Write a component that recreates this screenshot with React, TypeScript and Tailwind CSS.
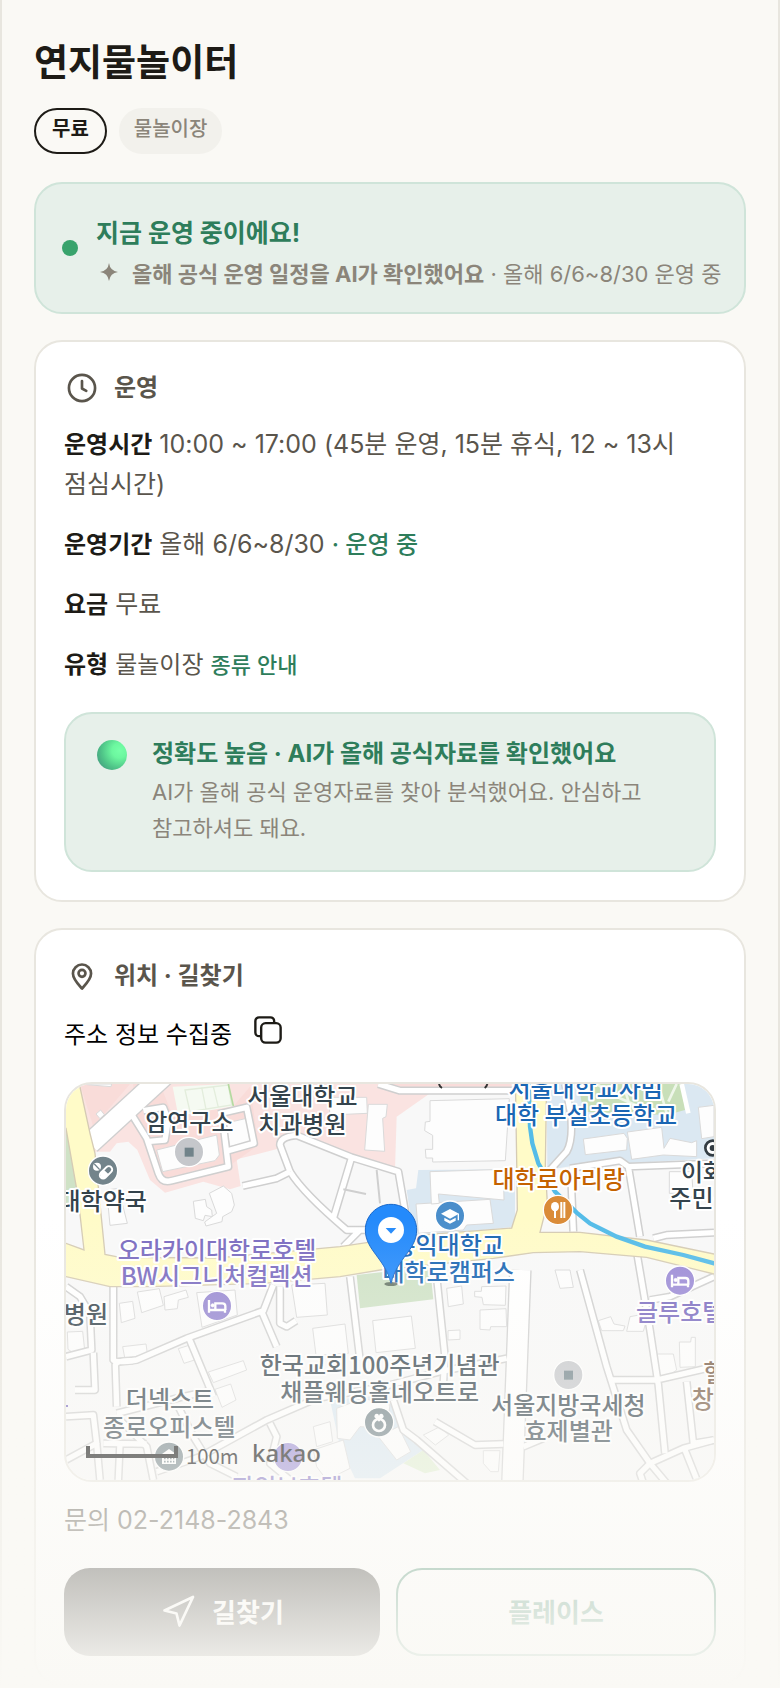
import { Navigation } from 'lucide-react'

type Label = { x: number; y: number; text: string; color: string; anchor?: 'start' | 'middle' | 'end' }

const INK = '#34434c'
const BLUE = '#1a66b3'
const PURPLE = '#7a6bc0'
const BROWN = '#73563f'

// map units are a third of a css pixel
const labels: Label[] = [
  { x: 757, y: 105, text: '서울대학교', color: INK },
  { x: 757, y: 188, text: '치과병원', color: INK },
  { x: 418, y: 183, text: '암연구소', color: INK },
  { x: 158, y: 421, text: '대학약국', color: INK },
  { x: 501, y: 566, text: '오라카이대학로호텔', color: PURPLE },
  { x: 500, y: 646, text: 'BW시그니처컬렉션', color: PURPLE },
  { x: 174, y: 759, text: '병원', color: INK, anchor: 'end' },
  { x: 989, y: 912, text: '한국교회100주년기념관', color: INK },
  { x: 989, y: 993, text: '채플웨딩홀네오트로', color: INK },
  { x: 360, y: 1014, text: '더넥스트', color: INK },
  { x: 358, y: 1099, text: '종로오피스텔', color: INK },
  { x: 712, y: 1277, text: '파인브호텔', color: PURPLE },
  { x: 1607, y: 81, text: '서울대학교사범', color: BLUE },
  { x: 1608, y: 161, text: '대학 부설초등학교', color: BLUE },
  { x: 1526, y: 354, text: '대학로아리랑', color: '#c46200' },
  { x: 1893, y: 334, text: '이화동', color: INK, anchor: 'start' },
  { x: 1858, y: 410, text: '주민센터', color: INK, anchor: 'start' },
  { x: 1196, y: 553, text: '홍익대학교', color: BLUE },
  { x: 1196, y: 634, text: '대학로캠퍼스', color: BLUE },
  { x: 1758, y: 752, text: '글루호텔', color: PURPLE, anchor: 'start' },
  { x: 1555, y: 1031, text: '서울지방국세청', color: INK },
  { x: 1556, y: 1111, text: '효제별관', color: INK },
  { x: 1960, y: 935, text: '헐', color: BROWN, anchor: 'start' },
  { x: 1925, y: 1014, text: '창', color: BROWN, anchor: 'start' },
]

const roads = [
  'M240 125L290 205L325 310Q335 340 365 332L535 290L520 165',
  'M290 215L345 210L355 150L340 112L280 122',
  'M505 132L590 112L612 220L535 242',
  'M578 348L680 325L720 305',
  'M850 445L905 262M720 305L690 225Q690 200 740 196L905 262L1045 305L1070 450',
  'M720 305Q760 370 890 480L1000 480M930 480L880 530',
  'M985 42L1050 62L1390 62',
  'M1500 300L1550 245Q1570 210 1562 130L1545 42',
  'M1560 295L1710 272L1735 290L1992 280M1562 295L1570 485M1735 290L1770 500',
  'M1810 505L1850 495L1992 488',
  'M190 650L190 870Q195 880 260 870L410 805L640 722L670 645',
  'M690 650L690 760L710 770L738 752M635 725L680 830',
  'M200 1010L196 885Q200 870 250 872M415 800L490 980',
  'M48 650L90 680L120 730L125 840L48 860',
  'M130 848L135 960L75 960M48 1040L130 1035L140 1120L48 1170',
  'M200 1030L400 980L490 960M200 1040L290 1130L310 1230',
  'M140 1120L150 1230M210 1120L205 1230M160 1120L290 1122',
  'M385 1010L430 1100L480 1180L560 1220M320 1205L450 1160L650 1050L800 985L1000 950L1170 905L1370 865',
  'M660 1060L680 1100L660 1180L720 1230',
  'M900 620L930 870M1160 620L1185 860L1180 940',
  'M1030 990L1060 1080L1100 1110L1250 1240',
  'M1155 1055L1275 1125L1360 1122M1420 1130L1480 1105',
  'M1590 600L1670 890L1730 1080L1800 1180L1850 1240',
  'M1760 545L1800 780L1825 945L1845 1150M1680 930L1820 930L1992 890',
  'M1800 690L1860 680L1992 620M1910 935L1930 1120L1992 1110',
  'M1800 1180L1900 1135L1992 1110M1905 1140L1945 1240M1800 1180L1770 1210L1780 1240',
]

const wideRoads = ['M360 0L120 220', 'M1411 600L1387 1240']

const buildings = [
  'M320 240L500 195L508 255L495 272L338 305Z',
  'M525 160L590 145L600 215L540 230Z',
  'M108 42L185 42L183 50L110 44Z',
  'M138 132L152 120L163 134L150 146Z',
  'M170 360L205 355L232 460L180 466Z',
  'M430 394L466 388L470 410L485 420L487 440L465 436L460 452L436 445Z',
  'M478 370L520 348L545 370L553 405L545 425L518 440L516 455L468 468L464 456L500 430Z',
  'M955 103L1012 103L1008 140L998 145L1004 244L944 240Z',
  'M835 82L950 82L952 130L840 135Z',
  'M1140 92L1378 86L1366 272L1148 276L1148 264L1128 264L1126 238L1148 238L1148 196L1124 182L1126 156L1140 154Z',
  'M1600 207L1722 190L1732 205L1730 240L1606 254Z',
  'M1732 186L1835 172L1842 235L1860 205L1925 218L1940 212L1940 260L1840 255L1745 268Z',
  'M1945 112L1992 106L1992 200L1955 206Z',
  'M1858 305L1925 305L1930 380L1890 385L1885 370L1858 370Z',
  'M1098 402L1320 388L1330 460L1250 465L1240 480L1105 490Z',
  'M1140 305L1360 298L1362 390L1165 372L1168 400L1144 402Z',
  'M262 666L328 656L340 706L275 728Z',
  'M342 680L408 660L415 682L385 690L382 716L345 720Z',
  'M208 700L248 694L255 745L214 758Z',
  'M440 668L555 660L562 735L456 772Z',
  'M52 786L98 784L104 840L66 846L54 838Z',
  'M218 830L288 822L292 850L225 868Z',
  'M385 836L420 825L434 870L402 880Z',
  'M475 906L580 872L590 900L490 938Z',
  'M495 958L542 942L558 990L516 1012Z',
  'M725 645L825 640L832 735L740 742Z',
  'M788 775L885 762L895 850L798 856Z',
  'M968 752L1084 738L1096 835L978 848Z',
  'M1190 655L1235 648L1240 702L1195 710Z',
  'M1295 650L1368 648L1366 706L1300 704L1296 682L1274 680L1274 664L1294 664Z',
  'M1290 720L1368 716L1370 770L1322 770L1320 780L1290 778Z',
  'M1194 782L1230 780L1230 808L1194 810Z',
  'M1515 600L1560 600L1570 652L1530 655Z',
  'M1645 752L1682 740L1692 762L1725 768L1720 782L1655 782Z',
  'M1740 740L1795 730L1780 784L1730 784Z',
  'M1888 816L1922 816L1924 802L1936 802L1936 890L1890 892Z',
  'M1822 852L1870 852L1880 900L1845 925L1824 915Z',
  'M1120 1095L1170 1070L1196 1095L1156 1125Z',
  'M1300 1142L1350 1142L1345 1205L1322 1205L1300 1180Z',
  'M860 1015L940 985L1020 1005L1010 1075L930 1070L900 1110L862 1105Z',
  'M985 1100L1045 1070L1082 1145L1040 1170Z',
  'M790 1070L840 1055L848 1115L800 1130Z',
  'M790 1140L880 1110L900 1195L830 1230L800 1190Z',
]

function Marker({ x, y, color, children }: { x: number; y: number; color: string; children?: React.ReactNode }) {
  return (
    <g transform={`translate(${x} ${y})`}>
      <circle r="44" fill={color} stroke="#fff" strokeWidth="4" />
      {children}
    </g>
  )
}

function Bed() {
  return (
    <g fill="none" stroke="#fff" strokeWidth="7">
      <path d="M-24 -18V20M-24 12H24V20" />
      <path d="M-5 12V-8H16Q25 -8 25 0V12" />
      <circle cx="-13" cy="-2" r="5" fill="#fff" strokeWidth="2" />
    </g>
  )
}

function LocationMap() {
  return (
    <svg
      viewBox="48 42 1944 1188"
      preserveAspectRatio="xMidYMid slice"
      className="block h-[396px] w-full"
      role="img"
      aria-label="지도"
    >
      <rect x="-400" y="-200" width="3000" height="1700" fill="#f8f8f8" />

      <path d="M88 42L1180 42L1040 140L1035 300L905 262L740 196L690 205L690 235L560 268L572 348L540 358L460 335L345 368L300 330L262 240L235 215L200 220L180 245L135 245L115 185Z" fill="#fae3e1" />
      <path d="M250 150L330 330L520 300L625 225L600 50L545 115L365 130L330 42L240 42L130 170L90 42L250 42Z" fill="#f9d9d7" opacity="0.8" />
      <path d="M1025 42H1385V64H1050Z" fill="#f9dcda" />
      <path d="M368 50L535 42L552 108L385 138Z" fill="#f5faf2" />
      <path d="M405 60L535 45L545 105L420 125ZM455 52L468 118M490 50L505 112" fill="none" stroke="#e3eddc" strokeWidth="4" />
      <path d="M535 42L550 108" stroke="#b5d9a0" strokeWidth="5" />
      <path d="M48 180L75 290L90 430L48 415Z" fill="#cfe2c6" />
      <path d="M1490 42H1992V265L1735 280L1710 265L1492 300Z" fill="#dbe8f2" />
      <path d="M1585 42L1895 42L1905 120L1850 135L1600 125Z" fill="#c8dfb9" />
      <path d="M1895 42L1915 130" stroke="#fff" strokeWidth="14" />
      <path d="M1640 42L1710 85L1790 120M1720 42L1740 110M1825 42L1850 130M1880 42L1855 95" fill="none" stroke="#eef6e9" strokeWidth="8" />
      <path d="M1105 300L1375 298L1395 330L1395 470L1090 500L1070 360L1098 355Z" fill="#dbe8f2" />
      <path d="M920 615L1140 590L1150 688L930 715Z" fill="#cfe2c6" />
      <path d="M840 990L1010 975L1060 1080L1120 1140L990 1225L915 1225L870 1130Z" fill="#d9e7f1" />
      <path d="M1060 1180L1120 1140L1170 1200L1125 1210Z" fill="#dfeed0" />

      <g fill="#fdfdfd" stroke="#dadada" strokeWidth="3">
        {buildings.map((d) => (
          <path key={d} d={d} />
        ))}
      </g>

      <g fill="none" strokeLinejoin="round">
        {wideRoads.map((d) => (
          <path key={d} d={d} stroke="#cfcfcf" strokeWidth="68" />
        ))}
        {roads.map((d) => (
          <path key={d} d={d} stroke="#cfcfcf" strokeWidth="25" />
        ))}
        {wideRoads.map((d) => (
          <path key={d} d={d} stroke="#fff" strokeWidth="60" />
        ))}
        {roads.map((d) => (
          <path key={d} d={d} stroke="#fff" strokeWidth="16" />
        ))}
        <path d="M880 358L948 372M980 300L990 400" stroke="#cfcfcf" strokeWidth="6" />
      </g>

      <path
        d="M-400 42H88L120 190L135 250L165 553L210 562L500 564L870 530L1090 497L1385 474L1402 420L1400 270L1396 20H1490L1486 290L1492 400L1470 487H1590L1790 510L1992 552L2500 640V740L1992 612L1790 562L1590 545L1450 548L1330 565L990 600L870 620L640 640L300 650L180 650L48 620L-400 560V470L48 520L102 540L84 380L48 175Z"
        fill="#fffbc8"
        stroke="#d5cbb4"
        strokeWidth="4"
      />
      <path
        d="M1436 42L1440 170L1447 220L1465 280L1515 365L1580 428L1620 460L1700 500L1785 530L1900 555L1992 580L2500 700"
        fill="none"
        stroke="#55bce8"
        strokeWidth="13"
      />

      <Marker x={417} y={246} color="#c5c7cb">
        <rect x="-13" y="-13" width="27" height="27" fill="#71838a" />
      </Marker>
      <Marker x={159} y={302} color="#73848b">
        <circle cx="-18" cy="-12" r="12" fill="#fff" />
        <path d="M-26 -20L-10 -3" stroke="#73848b" strokeWidth="4" />
        <rect x="-22" y="-10" width="44" height="20" rx="10" transform="translate(9 5) rotate(-45)" fill="none" stroke="#fff" strokeWidth="6" />
        <path d="M-7 20A10 10 0 0 0 8 20L17 11L3 -2L-7 8Z" fill="#fff" />
      </Marker>
      <Marker x={501} y={708} color="#9788d2">
        <Bed />
      </Marker>
      <Marker x={1890} y={632} color="#9b8bd6">
        <Bed />
      </Marker>
      <Marker x={714} y={1161} color="#9788d2" />
      <Marker x={1200} y={437} color="#4a8ecb">
        <path d="M-27 -6L0 -20L27 -6L0 9Z" fill="#fff" />
        <path d="M-17 6V15L0 24L17 15V6L0 15Z" fill="#fff" />
        <path d="M25 -6V14" stroke="#fff" strokeWidth="4" />
      </Marker>
      <Marker x={1524} y={420} color="#da8b38">
        <ellipse cx="-9" cy="-10" rx="12" ry="14" fill="#fff" />
        <path d="M-9 0V24M10 -24V24M19 -24V24" stroke="#fff" strokeWidth="6" />
      </Marker>
      <Marker x={987} y={1057} color="#6e7f85">
        <circle cy="8" r="18" fill="none" stroke="#fff" strokeWidth="8" />
        <path d="M0 -2L-14 -16Q-14 -26 -6 -26Q-1 -26 0 -20Q1 -26 6 -26Q14 -26 14 -16Z" fill="#fff" />
      </Marker>
      <Marker x={357} y={1160} color="#6e7f85">
        <path d="M-21 22V-8L0 -23L21 -8V22Z" fill="#fff" />
        <path d="M-15 5H16M-15 15H16" stroke="#6e7f85" strokeWidth="5" strokeDasharray="5 4" />
      </Marker>
      <Marker x={1555} y={915} color="#c5c7cb">
        <rect x="-13" y="-13" width="27" height="27" fill="#71838a" />
      </Marker>
      <circle cx="1988" cy="234" r="22" fill="#fff" stroke="#333c42" strokeWidth="8" />
      <circle cx="1988" cy="234" r="9" fill="#333c42" />

      <g
        fontSize="72"
        fontWeight="500"
        stroke="#fff"
        strokeWidth="12"
        strokeLinejoin="round"
        paintOrder="stroke"
        className="font-['Noto_Sans_CJK_KR',sans-serif]"
      >
        {labels.map(({ x, y, text, color, anchor = 'middle' }) => (
          <text key={`${x}-${y}`} x={x} y={y} fill={color} textAnchor={anchor}>
            {text}
          </text>
        ))}
      </g>
      <path d="M1167 42Q1169 50 1176 54M1312 42Q1310 50 1304 54" fill="none" stroke="#333" strokeWidth="6" />
      <path d="M48 1008H54" stroke={PURPLE} strokeWidth="6" />

      <ellipse cx="1023" cy="642" rx="20" ry="6" fill="#3c4a40" opacity="0.7" />
      <path
        d="M1023 403C980 403 946 438 946 480C946 540 1005 565 1023 640C1041 565 1100 540 1100 480C1100 438 1066 403 1023 403Z"
        fill="#248afb"
        stroke="#1766c9"
        strokeWidth="3"
      />
      <circle cx="1023" cy="480" r="39" fill="#fff" />
      <path d="M1007 474H1039L1023 491Z" fill="#248afb" />

      <path d="M114 1128V1158H378V1128" fill="none" stroke="#000" strokeWidth="12" />
      <text x="408" y="1183" fontSize="61" fontWeight="400" className="font-['Noto_Sans_CJK_KR',sans-serif]">
        100m
      </text>
      <text x="606" y="1175" fontSize="72" fontWeight="500" className="font-['Noto_Sans',sans-serif]">
        kakao
      </text>
    </svg>
  )
}

function SectionTitle({ icon, children }: { icon: React.ReactNode; children: React.ReactNode }) {
  return (
    <h2 className="mb-[18px] flex h-9 items-center gap-4 pl-[2px] text-[24px] font-bold text-[#5a554c]">
      <svg
        viewBox="0 0 24 24"
        className="size-8"
        fill="none"
        stroke="currentColor"
        strokeWidth="2"
        strokeLinecap="round"
        strokeLinejoin="round"
        aria-hidden="true"
      >
        {icon}
      </svg>
      {children}
    </h2>
  )
}

function InfoRow({ label, children }: { label: string; children: React.ReactNode }) {
  return (
    <p>
      <strong className="text-[24px] leading-none font-bold text-[#1d1b16]">{label}</strong> {children}
    </p>
  )
}

export default function App() {
  return (
    <main className="relative min-h-screen border-x-2 border-[#e8e6df] bg-[#faf9f5] px-8 pt-[41px] font-['Inter','Noto_Sans_CJK_KR',sans-serif] break-keep text-[#1d1b16]">
      <h1 className="text-[37px] leading-[44px] font-bold">연지물놀이터</h1>

      <div className="mt-[23px] flex gap-3 text-[20px] leading-[38px]">
        <span className="h-[46px] rounded-full border-2 border-[#1d1b16] px-4 font-bold">무료</span>
        <span className="h-[46px] rounded-full border-2 border-[#f2f1ec] bg-[#f2f1ec] px-[13px] font-medium text-[#8b857a]">
          물놀이장
        </span>
      </div>

      <section className="mt-7 flex items-center gap-[18px] rounded-[28px] border-2 border-[#cfe4d9] bg-[#e7f0ea] px-[26px] pt-[25px] pb-[21px]">
        <span className="mb-1 size-4 shrink-0 rounded-full bg-[#38a36c]"></span>
        <div>
          <p className="text-[25px] leading-[48px] font-bold text-[#2e7d5b]">지금 운영 중이에요!</p>
          <p className="flex items-center gap-[14px] text-[22px] leading-[34px] whitespace-nowrap text-[#8b857a]">
            <svg viewBox="0 0 24 24" className="mb-1 ml-1 size-[18px]" fill="currentColor" aria-hidden="true">
              <path d="M12 0Q13.5 10.5 24 12Q13.5 13.5 12 24Q10.5 13.5 0 12Q10.5 10.5 12 0Z" />
            </svg>
            <span>
              <b className="font-bold">올해 공식 운영 일정을 AI가 확인했어요</b> · 올해 6/6~8/30 운영 중
            </span>
          </p>
        </div>
      </section>

      <section className="mt-[26px] rounded-[28px] border-2 border-[#e8e6df] bg-white p-7">
        <SectionTitle
          icon={
            <>
              <circle cx="12" cy="12" r="9.8" />
              <path d="M12 6.8V12.4L15.2 14.2" />
            </>
          }
        >
          운영
        </SectionTitle>
        <div className="flex flex-col gap-5 text-[25px] leading-[40px] text-[#5a554c]">
          <InfoRow label="운영시간">10:00 ~ 17:00 (45분 운영, 15분 휴식, 12 ~ 13시 점심시간)</InfoRow>
          <InfoRow label="운영기간">
            올해 6/6~8/30 <span className="text-[24px] leading-none font-medium text-[#2e7d5b]">· 운영 중</span>
          </InfoRow>
          <InfoRow label="요금">무료</InfoRow>
          <InfoRow label="유형">
            <span className="text-[24px] leading-none">물놀이장</span>{' '}
            <a href="#types" className="text-[22px] leading-none font-medium text-[#2e7d5b]">
              종류 안내
            </a>
          </InfoRow>
        </div>
        <div className="mt-7 flex gap-[25px] rounded-[28px] border-2 border-[#cfe4d9] bg-[#e7f0ea] py-6 pr-8 pl-[31px]">
          <span className="mt-[2px] size-[30px] shrink-0 rounded-full bg-[radial-gradient(circle_at_75%_35%,#76ffa8_0%,#6cf79f_25%,#4fc488_60%,#459f80_85%,#5d83a0_100%)]"></span>
          <div>
            <h3 className="mb-1 text-[24px] leading-[32px] font-bold text-[#2e7d5b]">
              정확도 높음 · AI가 올해 공식자료를 확인했어요
            </h3>
            <p className="text-[22px] leading-[36px] text-[#8b857a]">
              AI가 올해 공식 운영자료를 찾아 분석했어요. 안심하고 참고하셔도 돼요.
            </p>
          </div>
        </div>
      </section>

      <section className="mt-[26px] rounded-[28px] border-2 border-[#e8e6df] bg-white p-7">
        <SectionTitle
          icon={
            <>
              <path d="M12 21.4C9.5 18.6 5.2 14.6 5.2 10.2A6.8 6.8 0 0 1 18.8 10.2C18.8 14.6 14.5 18.6 12 21.4Z" />
              <circle cx="12" cy="10" r="2.6" />
            </>
          }
        >
          위치 · 길찾기
        </SectionTitle>
        <div className="flex items-start gap-[22px] text-[24px] leading-[46px] text-black">
          <span>주소 정보 수집중</span>
          <button type="button" aria-label="주소 복사" className="mt-1 text-[#1d1b16]">
            <svg viewBox="0 0 82 82" className="size-7" fill="none" stroke="currentColor" strokeWidth="7" strokeLinecap="round">
              <rect x="21" y="21" width="57" height="57" rx="13" />
              <path d="M17 59H15A11 11 0 0 1 4 48V15A11 11 0 0 1 15 4H48A11 11 0 0 1 59 15V19" />
            </svg>
          </button>
        </div>
        <div className="mt-6 overflow-hidden rounded-[28px] border-2 border-[#e8e6df]">
          <LocationMap />
        </div>
        <p className="mt-[18px] text-[25px] leading-[40px] text-[#5a554c]">
          문의 <a href="tel:02-2148-2843">02-2148-2843</a>
        </p>
        <div className="mt-7 flex gap-4 text-[26px] font-bold">
          <button type="button" className="flex h-[88px] flex-1 items-center justify-center gap-4 rounded-[26px] bg-[#1d1b16] text-white">
            <Navigation size={36} strokeWidth={1.8} aria-hidden="true" />
            길찾기
          </button>
          <button type="button" className="h-[88px] flex-1 rounded-[26px] border-2 border-[#2e7d5b] bg-white text-[#2e7d5b]">
            플레이스
          </button>
        </div>
      </section>

      <div className="pointer-events-none absolute -inset-x-[2px] bottom-0 h-[470px] bg-linear-to-t from-[#faf9f5] to-[#faf9f5]/0"></div>
    </main>
  )
}
